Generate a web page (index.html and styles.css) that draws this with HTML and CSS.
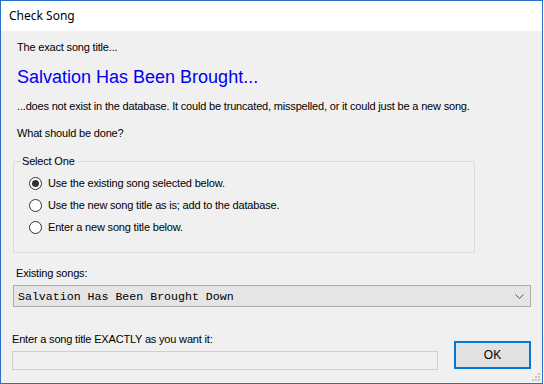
FILE: index.html
```html
<!DOCTYPE html>
<html lang="en">

<head>
    <meta charset="UTF-8">
    <title>Check Song</title>
    <link rel="stylesheet" href="styles.css">
</head>

<body>
    <div class="window">
        <div class="titlebar">Check Song</div>
        <div class="content">
            <p class="line first">The exact song title...</p>
            <p class="song">Salvation Has Been Brought...</p>
            <p class="line notice">...does not exist in the database. It could be truncated, misspelled, or it could just be a new song.</p>
            <p class="line ask">What should be done?</p>

            <fieldset class="choices">
                <legend>Select One</legend>
                <label class="choice"><input type="radio" name="act" checked>Use the existing song selected below.</label>
                <label class="choice"><input type="radio" name="act">Use the new song title as is; add to the database.</label>
                <label class="choice"><input type="radio" name="act">Enter a new song title below.</label>
            </fieldset>

            <p class="line existing">Existing songs:</p>
            <div class="combo">
                <span>Salvation Has Been Brought Down</span>
                <svg width="9" height="5" viewBox="0 0 9 5"><polyline points="0.5,0.5 4.5,4.5 8.5,0.5" fill="none" stroke="#555" stroke-width="1"/></svg>
            </div>

            <div class="footer">
                <div class="entry">
                    <p class="line">Enter a song title EXACTLY as you want it:</p>
                    <input type="text" class="title-box" disabled>
                </div>
                <button class="ok">OK</button>
            </div>
        </div>
        <svg class="grip" width="8" height="8" viewBox="0 0 8 8">
            <rect x="6" y="0" width="2" height="2" fill="#c4c4c4"/>
            <rect x="3" y="3" width="2" height="2" fill="#c4c4c4"/>
            <rect x="6" y="3" width="2" height="2" fill="#c4c4c4"/>
            <rect x="0" y="6" width="2" height="2" fill="#c4c4c4"/>
            <rect x="3" y="6" width="2" height="2" fill="#c4c4c4"/>
            <rect x="6" y="6" width="2" height="2" fill="#c4c4c4"/>
        </svg>
    </div>
</body>

</html>
```

FILE: styles.css
```css
* {
    margin: 0;
    padding: 0;
    box-sizing: border-box;
}

html,
body {
    background: #fff;
}

.window {
    position: relative;
    width: 543px;
    height: 384px;
    border: 1px solid #2a6fcb;
    background: #f0f0f0;
    font-family: "Liberation Sans", Arial, sans-serif;
    font-size: 11px;
    letter-spacing: -0.18px;
    color: #000;
}

.titlebar {
    height: 30px;
    line-height: 30px;
    padding-left: 8px;
    background: #fff;
    font-family: "Noto Sans", "Open Sans", sans-serif;
    font-size: 12px;
    letter-spacing: 0;
}

.content {
    padding: 10px 0 0 16px;
}

.line {
    line-height: 13px;
}

.song {
    margin-top: 12px;
    font-size: 18px;
    line-height: 22px;
    letter-spacing: 0;
    color: #0000f0;
}

.notice {
    margin-top: 12px;
}

.ask {
    margin-top: 14px;
}

.choices {
    margin: 15px 0 0 -4px;
    width: 462px;
    padding: 4px 7px 14px;
    border: 1px solid #dcdcdc;
    display: flex;
    flex-direction: column;
}

.choices legend {
    padding: 0 1px;
    line-height: 13px;
}

.choice {
    height: 22px;
    display: flex;
    align-items: center;
}

.choice input {
    appearance: none;
    width: 13px;
    height: 13px;
    margin: 0 6px 0 8px;
    border: 1px solid #333;
    border-radius: 50%;
    background: #fff;
    display: flex;
    align-items: center;
    justify-content: center;
}

.choice input:checked::after {
    content: "";
    width: 7px;
    height: 7px;
    border-radius: 50%;
    background: #333;
}

.existing {
    margin: 14px 0 0 -1px;
}

.combo {
    margin: 5px 0 0 -4px;
    width: 518px;
    height: 22px;
    border: 1px solid #adadad;
    background: #e5e5e5;
    display: flex;
    align-items: center;
    justify-content: space-between;
    padding: 0 6px 0 4px;
}

.combo span {
    font-family: "Liberation Mono", "Courier New", monospace;
    font-size: 11.6px;
    letter-spacing: 0;
}

.footer {
    margin: 26px 0 0 -5px;
    width: 519px;
    display: flex;
    align-items: flex-end;
    justify-content: space-between;
}

.title-box {
    display: block;
    margin-top: 5px;
    width: 426px;
    height: 19px;
    border: 1px solid #cfcfcf;
    background: #f0f0f0;
}

.ok {
    width: 77px;
    height: 28px;
    margin-bottom: 1px;
    border: 2px solid #0078d7;
    background: #e1e1e1;
    font-family: "Liberation Sans", Arial, sans-serif;
    font-size: 12px;
    color: #000;
}

.grip {
    position: absolute;
    right: 2px;
    bottom: 2px;
}
```
